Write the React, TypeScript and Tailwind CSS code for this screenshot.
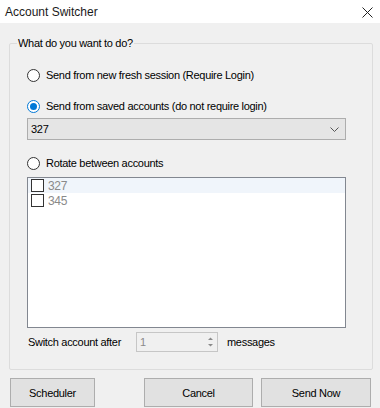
import React from "react";

function Radio({ checked }: { checked?: boolean }) {
  return (
    <span
      className={
        "flex h-[13px] w-[13px] shrink-0 items-center justify-center rounded-full border bg-white " +
        (checked ? "border-[#0078d7]" : "border-[#333333]")
      }
    >
      {checked && <span className="h-[7px] w-[7px] rounded-full bg-[#0078d7]" />}
    </span>
  );
}

function Check() {
  return <span className="h-[13px] w-[13px] shrink-0 border border-[#333333] bg-white" />;
}

export default function App() {
  const accounts = ["327", "345"];

  return (
    <div
      className="h-[408px] w-[380px] overflow-hidden bg-[#f0f0f0] text-[11px] leading-[14px] tracking-[-0.3px] text-black"
      style={{ fontFamily: '"Liberation Sans", Arial, sans-serif' }}
    >
      {/* title bar */}
      <div className="flex h-[23px] items-center justify-between bg-white pl-[5px] pr-[7px]">
        <span className="text-[12px] tracking-normal text-[#1a1a1a]">Account Switcher</span>
        <svg width="11" height="11" viewBox="0 0 11 11" className="mt-[1px]">
          <path d="M0.5 0.5 L10.5 10.5 M10.5 0.5 L0.5 10.5" stroke="#222" strokeWidth="1" />
        </svg>
      </div>

      <fieldset className="ml-[9px] mt-[13px] h-[334px] w-[364px] rounded-[2px] border border-[#dcdcdc] pl-[17px] pr-[26px]">
        <legend className="-ml-[10px] px-[1px] leading-[14px]">What do you want to do?</legend>

        <label className="mt-[17px] flex h-[16px] items-center gap-[6px]">
          <Radio />
          <span>Send from new fresh session (Require Login)</span>
        </label>

        <label className="mt-[15px] flex h-[16px] items-center gap-[6px]">
          <Radio checked />
          <span>Send from saved accounts (do not require login)</span>
        </label>

        <div className="mt-[4px] flex h-[22px] w-[319px] items-center justify-between border border-[#adadad] bg-[#e5e5e5] pl-[3px] pr-[6px]">
          <span>327</span>
          <svg width="9" height="5" viewBox="0 0 9 5">
            <path d="M0.5 0.5 L4.5 4.5 L8.5 0.5" fill="none" stroke="#555" strokeWidth="1" />
          </svg>
        </div>

        <label className="mt-[15px] flex h-[16px] items-center gap-[6px]">
          <Radio />
          <span>Rotate between accounts</span>
        </label>

        <div className="mt-[6px] h-[151px] w-[319px] border border-[#828790] bg-white">
          {accounts.map((a, i) => (
            <div
              key={a}
              className={
                "flex h-[15px] items-center gap-[4px] pl-[3px] text-[12px] text-[#8a8a8a] " +
                (i === 0 ? "bg-[#f0f5fb]" : "")
              }
            >
              <Check />
              <span>{a}</span>
            </div>
          ))}
        </div>

        <div className="mt-[4px] flex h-[20px] items-center whitespace-nowrap">
          <span className="ml-[1px] w-[108px]">Switch account after</span>
          <div className="flex h-[20px] w-[82px] items-center justify-between border border-[#c6c6c6] bg-[#f0f0f0] pl-[3px] pr-[2px]">
            <span className="text-[#8a8a8a]">1</span>
            <svg width="9" height="14" viewBox="0 0 9 14">
              <path d="M2 5 L4.5 2.5 L7 5 Z" fill="#8a8a8a" />
              <path d="M2 9 L4.5 11.5 L7 9 Z" fill="#8a8a8a" />
            </svg>
          </div>
          <span className="ml-[9px]">messages</span>
        </div>
      </fieldset>

      <div className="mt-[8px] flex">
        <button className="ml-[10px] h-[29px] w-[85px] border border-[#adadad] bg-[#e1e1e1]">Scheduler</button>
        <button className="ml-[49px] h-[29px] w-[109px] border border-[#adadad] bg-[#e1e1e1]">Cancel</button>
        <button className="ml-[8px] h-[29px] w-[110px] border border-[#adadad] bg-[#e1e1e1]">Send Now</button>
      </div>
    </div>
  );
}
